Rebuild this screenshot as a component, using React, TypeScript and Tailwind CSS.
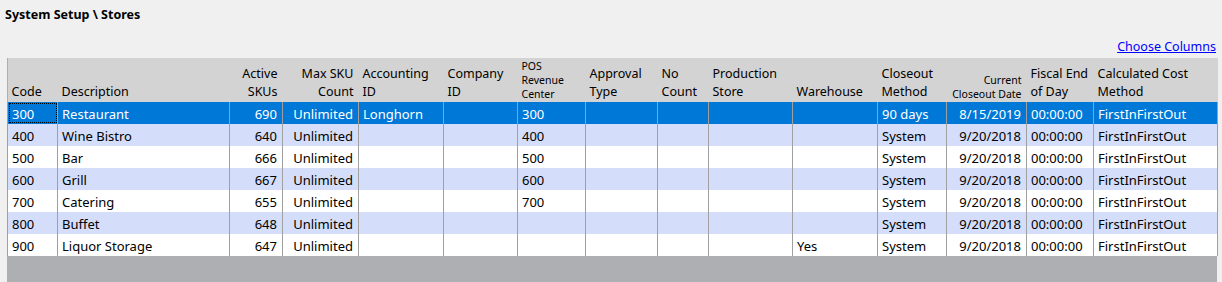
import React from "react";

type Col = {
  head: string[];
  width: number;
  align?: "right";
  small?: boolean;
};

const columns: Col[] = [
  { head: ["Code"], width: 50 },
  { head: ["Description"], width: 172 },
  { head: ["Active", "SKUs"], width: 53, align: "right" },
  { head: ["Max SKU", "Count"], width: 76, align: "right" },
  { head: ["Accounting", "ID"], width: 85 },
  { head: ["Company", "ID"], width: 74 },
  { head: ["POS", "Revenue", "Center"], width: 68, small: true },
  { head: ["Approval", "Type"], width: 72 },
  { head: ["No", "Count"], width: 51 },
  { head: ["Production", "Store"], width: 84 },
  { head: ["Warehouse"], width: 85 },
  { head: ["Closeout", "Method"], width: 69 },
  { head: ["Current", "Closeout Date"], width: 80, align: "right", small: true },
  { head: ["Fiscal End", "of Day"], width: 67 },
  { head: ["Calculated Cost", "Method"], width: 124 },
];

const rows: string[][] = [
  ["300", "Restaurant", "690", "Unlimited", "Longhorn", "", "300", "", "", "", "", "90 days", "8/15/2019", "00:00:00", "FirstInFirstOut"],
  ["400", "Wine Bistro", "640", "Unlimited", "", "", "400", "", "", "", "", "System", "9/20/2018", "00:00:00", "FirstInFirstOut"],
  ["500", "Bar", "666", "Unlimited", "", "", "500", "", "", "", "", "System", "9/20/2018", "00:00:00", "FirstInFirstOut"],
  ["600", "Grill", "667", "Unlimited", "", "", "600", "", "", "", "", "System", "9/20/2018", "00:00:00", "FirstInFirstOut"],
  ["700", "Catering", "655", "Unlimited", "", "", "700", "", "", "", "", "System", "9/20/2018", "00:00:00", "FirstInFirstOut"],
  ["800", "Buffet", "648", "Unlimited", "", "", "", "", "", "", "", "System", "9/20/2018", "00:00:00", "FirstInFirstOut"],
  ["900", "Liquor Storage", "647", "Unlimited", "", "", "", "", "", "", "Yes", "System", "9/20/2018", "00:00:00", "FirstInFirstOut"],
];

export default function App() {
  return (
    <div
      className="w-[1222px] h-[282px] overflow-hidden bg-[#f0f0f0] text-black flex flex-col"
      style={{ fontFamily: '"Noto Sans", "Open Sans", sans-serif' }}
    >
      <div className="h-[30px] pl-[5px] pt-[6px] text-[12.5px] font-bold leading-[18px]">
        System Setup \ Stores
      </div>

      <div className="h-[28px] flex justify-end items-end pr-[6px] pb-[2px]">
        <a href="#" className="text-[12.5px] leading-[18px] text-[#0000ff] underline">
          Choose Columns
        </a>
      </div>

      <div className="ml-[7px] w-[1210px] flex-1 bg-[#aeafb2]">
        <table className="table-fixed border-collapse w-[1210px]">
          <colgroup>
            {columns.map((c, i) => (
              <col key={i} style={{ width: c.width }} />
            ))}
          </colgroup>
          <thead>
            <tr className="h-[44px] bg-[#d3d3d3]">
              {columns.map((c, i) => (
                <th
                  key={i}
                  className={`align-bottom font-normal px-[4px] pb-[1px] whitespace-nowrap ${
                    c.align === "right" ? "text-right pr-[5px]" : "text-left"
                  } ${c.small ? "text-[10.5px] leading-[14px]" : "text-[12.5px] leading-[18px]"}`}
                >
                  {c.head.map((h, j) => (
                    <div key={j}>{h}</div>
                  ))}
                </th>
              ))}
            </tr>
          </thead>
          <tbody className="text-[13px]">
            {rows.map((r, ri) => {
              const selected = ri === 0;
              const bg = selected
                ? "bg-[#0078d7] text-white"
                : ri % 2 === 1
                ? "bg-[#d4defa]"
                : "bg-white";
              return (
                <tr key={ri} className={`h-[22px] ${bg}`}>
                  {r.map((v, ci) => (
                    <td
                      key={ci}
                      className={`border-x border-[#a0a0a0] px-[4px] pt-[2px] leading-[20px] whitespace-nowrap overflow-hidden ${
                        columns[ci].align === "right" ? "text-right pr-[5px]" : "text-left"
                      } ${
                        selected && ci === 0
                          ? "outline-1 outline-dotted outline-black -outline-offset-2"
                          : ""
                      }`}
                    >
                      {v}
                    </td>
                  ))}
                </tr>
              );
            })}
          </tbody>
        </table>
      </div>
    </div>
  );
}
